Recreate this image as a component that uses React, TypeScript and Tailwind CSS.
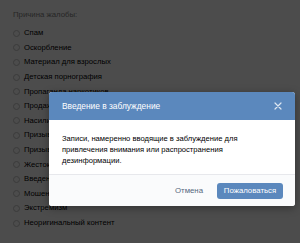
import React from "react";

const items = [
  "Спам",
  "Оскорбление",
  "Материал для взрослых",
  "Детская порнография",
  "Пропаганда наркотиков",
  "Продажа оружия",
  "Насилие",
  "Призыв к травле",
  "Призыв к суициду",
  "Жестокое обращение с животными",
  "Введение в заблуждение",
  "Мошенничество",
  "Экстремизм",
  "Неоригинальный контент",
];

export default function App() {
  return (
    <div
      className="relative w-[300px] h-[243px] overflow-hidden bg-white"
      style={{ fontFamily: '"Liberation Sans", Arial, sans-serif' }}
    >
      <div className="pl-[13px] pt-[10px]">
        <div className="text-[7.8px] leading-[10px] text-[#828282] mb-[6px]">Причина жалобы:</div>
        <div className="flex flex-col">
          {items.map((t) => (
            <div key={t} className="flex items-center h-[14.6px]">
              <span className="w-[7px] h-[7px] rounded-full border border-[#c5c5c5] mr-[4px]" />
              <span className="text-[7.7px] leading-[10px] text-[#000]">{t}</span>
            </div>
          ))}
        </div>
      </div>

      <div className="absolute inset-0 bg-black/70" />

      <div className="absolute left-[49px] top-[92px] w-[246px] rounded-[3px] overflow-hidden shadow-[0_2px_8px_rgba(0,0,0,0.35)] bg-white">
        <div className="h-[28px] bg-[#5b88bd] flex items-center justify-between pl-[13px] pr-[13px]">
          <span className="text-[8.4px] text-white">Введение в заблуждение</span>
          <svg width="8" height="8" viewBox="0 0 8 8" className="text-white/80">
            <path d="M1 1L7 7M7 1L1 7" stroke="currentColor" strokeWidth="1.2" strokeLinecap="round" />
          </svg>
        </div>
        <div className="h-[54px] pl-[13px] pr-[13px] pt-[13px] text-[7.6px] leading-[11px] text-[#000]">
          Записи, намеренно вводящие в заблуждение для
          <br />
          привлечения внимания или распространения
          <br />
          дезинформации.
        </div>
        <div className="h-[32px] bg-[#fafbfc] border-t border-[#e7e8ec] flex items-center justify-end pr-[12px]">
          <span className="text-[7.8px] text-[#55677d] mr-[14px]">Отмена</span>
          <div className="h-[16px] w-[66px] rounded-[3px] bg-[#5b88bd] flex items-center justify-center text-[7.8px] text-white">
            Пожаловаться
          </div>
        </div>
      </div>
    </div>
  );
}
